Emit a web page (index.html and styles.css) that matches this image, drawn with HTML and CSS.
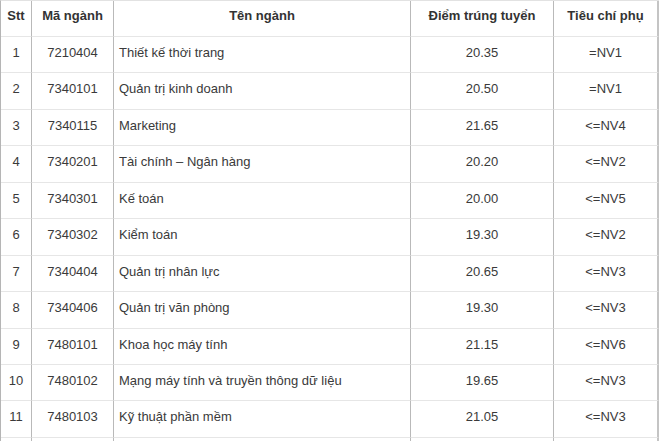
FILE: index.html
```html
<!DOCTYPE html>
<html lang="vi">
<head>
<meta charset="utf-8">
<link rel="stylesheet" href="styles.css">
</head>
<body>
<table class="tbl">
<colgroup>
<col class="c1"><col class="c2"><col class="c3"><col class="c4"><col class="c5">
</colgroup>
<thead>
<tr><th>Stt</th><th>Mã ngành</th><th>Tên ngành</th><th>Điểm trúng tuyển</th><th>Tiêu chí phụ</th></tr>
</thead>
<tbody>
<tr><td>1</td><td>7210404</td><td class="name">Thiết kế thời trang</td><td>20.35</td><td>=NV1</td></tr>
<tr><td>2</td><td>7340101</td><td class="name">Quản trị kinh doanh</td><td>20.50</td><td>=NV1</td></tr>
<tr><td>3</td><td>7340115</td><td class="name">Marketing</td><td>21.65</td><td>&lt;=NV4</td></tr>
<tr><td>4</td><td>7340201</td><td class="name">Tài chính – Ngân hàng</td><td>20.20</td><td>&lt;=NV2</td></tr>
<tr><td>5</td><td>7340301</td><td class="name">Kế toán</td><td>20.00</td><td>&lt;=NV5</td></tr>
<tr><td>6</td><td>7340302</td><td class="name">Kiểm toán</td><td>19.30</td><td>&lt;=NV2</td></tr>
<tr><td>7</td><td>7340404</td><td class="name">Quản trị nhân lực</td><td>20.65</td><td>&lt;=NV3</td></tr>
<tr><td>8</td><td>7340406</td><td class="name">Quản trị văn phòng</td><td>19.30</td><td>&lt;=NV3</td></tr>
<tr><td>9</td><td>7480101</td><td class="name">Khoa học máy tính</td><td>21.15</td><td>&lt;=NV6</td></tr>
<tr><td>10</td><td>7480102</td><td class="name">Mạng máy tính và truyền thông dữ liệu</td><td>19.65</td><td>&lt;=NV3</td></tr>
<tr><td>11</td><td>7480103</td><td class="name">Kỹ thuật phần mềm</td><td>21.05</td><td>&lt;=NV3</td></tr>
<tr><td></td><td></td><td class="name"></td><td></td><td></td></tr>
</tbody>
</table>
</body>
</html>
```
FILE: styles.css
```css
html, body {
  margin: 0;
  padding: 0;
  background: #fff;
}
body {
  font-family: "Liberation Sans", Arial, sans-serif;
  font-size: 13px;
  color: #3a3a3a;
  overflow: hidden;
}
.tbl {
  border-collapse: separate;
  border-spacing: 0;
  table-layout: fixed;
  width: 659px;
  border-left: 1px solid #b5b5b5;
  border-top: 1px solid #e2e2e2;
}
.c1 { width: 31px; }
.c2 { width: 82px; }
.c3 { width: 297px; }
.c4 { width: 143px; }
.c5 { width: 105px; }
.tbl th, .tbl td {
  box-sizing: border-box;
  border-right: 1px solid #b9b9b9;
  border-bottom: 1px solid #e6e6e6;
  padding: 8px 4px 0;
  line-height: 15px;
  vertical-align: top;
  text-align: center;
  white-space: nowrap;
}
.tbl th:last-child, .tbl td:last-child {
  border-right: 2px solid #c4c4c4;
}
.tbl th {
  height: 36px;
  font-weight: bold;
  color: #333;
  padding-top: 7px;
}
.tbl td {
  height: 36.45px;
}
.tbl td.name {
  text-align: left;
  padding-left: 5px;
}
```
